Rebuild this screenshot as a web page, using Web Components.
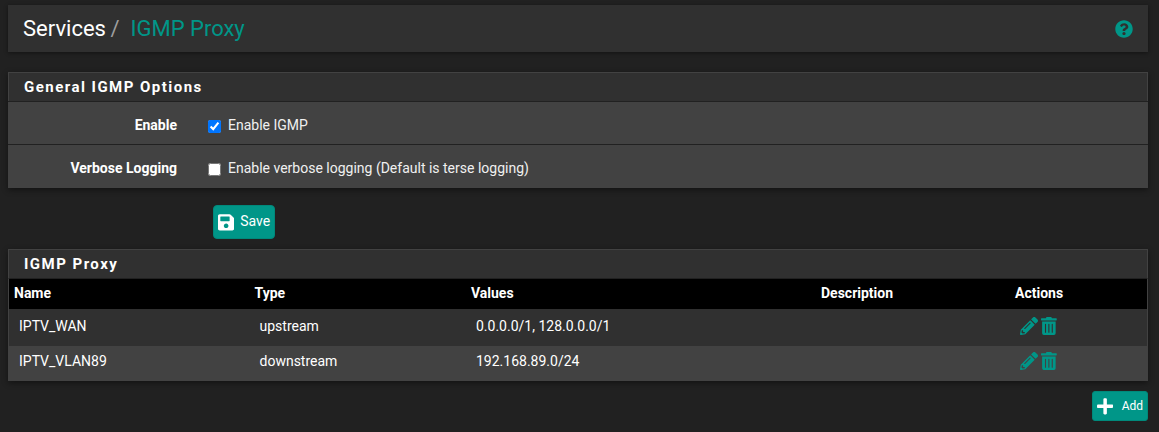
<!DOCTYPE html>
<html lang="en">
<head>
<meta charset="utf-8">
<title>Services / IGMP Proxy</title>
<style>
html{background:#212121}
body{margin:0;padding:5px 11px 0 8px;color:#fff;font:14px/20px Roboto,sans-serif;overflow:hidden}
.save{margin:17px 0 10px 205px;display:flex}
.add{display:flex;justify-content:flex-end;margin-top:10px}
</style>
</head>
<body>
<page-header section="Services" page="IGMP Proxy"></page-header>
<option-panel heading="General IGMP Options">
  <form-row label="Enable" checked>Enable IGMP</form-row>
  <form-row label="Verbose Logging">Enable verbose logging (Default is terse logging)</form-row>
</option-panel>
<div class="save"><action-button icon="save">Save</action-button></div>
<option-panel heading="IGMP Proxy"><proxy-table></proxy-table></option-panel>
<div class="add"><action-button icon="plus" small>Add</action-button></div>
<script>
const ICONS={
 help:[512,'M504 256c0 136.997-111.043 248-248 248S8 392.997 8 256C8 119.083 119.043 8 256 8s248 111.083 248 248zM262.655 90c-54.497 0-89.255 22.957-116.549 63.758-3.536 5.286-2.353 12.415 2.715 16.258l34.699 26.31c5.205 3.947 12.621 3.008 16.665-2.122 17.864-22.658 30.113-35.797 57.303-35.797 20.429 0 45.698 13.148 45.698 32.958 0 14.976-12.363 22.667-32.534 33.976C247.128 238.528 216 254.941 216 296v4c0 6.627 5.373 12 12 12h56c6.627 0 12-5.373 12-12v-1.333c0-28.462 83.186-29.647 83.186-106.667 0-58.002-60.165-102-116.531-102zM256 338c-25.365 0-46 20.635-46 46 0 25.364 20.635 46 46 46s46-20.636 46-46c0-25.365-20.635-46-46-46z'],
 save:[448,'M433.941 129.941l-83.882-83.882A48 48 0 0 0 316.118 32H48C21.49 32 0 53.49 0 80v352c0 26.51 21.49 48 48 48h352c26.51 0 48-21.49 48-48V163.882a48 48 0 0 0-14.059-33.941zM224 416c-35.346 0-64-28.654-64-64 0-35.346 28.654-64 64-64s64 28.654 64 64c0 35.346-28.654 64-64 64zm96-304.52V212c0 6.627-5.373 12-12 12H76c-6.627 0-12-5.373-12-12V108c0-6.627 5.373-12 12-12h228.52c3.183 0 6.235 1.264 8.485 3.515l3.48 3.48A11.996 11.996 0 0 1 320 111.48z'],
 plus:[448,'M416 208H272V64c0-17.67-14.33-32-32-32h-32c-17.67 0-32 14.33-32 32v144H32c-17.67 0-32 14.33-32 32v32c0 17.67 14.33 32 32 32h144v144c0 17.67 14.33 32 32 32h32c17.67 0 32-14.33 32-32V304h144c17.67 0 32-14.33 32-32v-32c0-17.67-14.33-32-32-32z'],
 pencil:[512,'M497.9 142.1l-46.1 46.1c-4.7 4.7-12.3 4.7-17 0l-111-111c-4.7-4.7-4.7-12.3 0-17l46.1-46.1c18.7-18.7 49.1-18.7 67.9 0l60.1 60.1c18.8 18.7 18.8 49.1 0 67.9zM284.2 99.8L21.6 362.4.4 483.9c-2.9 16.4 11.4 30.6 27.8 27.8l121.5-21.3 262.6-262.6c4.7-4.7 4.7-12.3 0-17l-111-111c-4.8-4.7-12.4-4.7-17.1 0zM124.1 339.9c-5.5-5.5-5.5-14.3 0-19.8l154-154c5.5-5.5 14.3-5.5 19.8 0s5.5 14.3 0 19.8l-154 154c-5.5 5.5-14.3 5.5-19.8 0zM88 424h48v36.3l-64.5 11.3-31.1-31.1L51.7 376H88v48z'],
 trash:[448,'M32 464a48 48 0 0 0 48 48h288a48 48 0 0 0 48-48V128H32zm272-256a16 16 0 0 1 32 0v224a16 16 0 0 1-32 0zm-96 0a16 16 0 0 1 32 0v224a16 16 0 0 1-32 0zm-96 0a16 16 0 0 1 32 0v224a16 16 0 0 1-32 0zM432 32H312l-9.4-18.7A24 24 0 0 0 281.1 0H166.8a23.72 23.72 0 0 0-21.4 13.3L136 32H16A16 16 0 0 0 0 48v32a16 16 0 0 0 16 16h416a16 16 0 0 0 16-16V48a16 16 0 0 0-16-16z']
};
class Base extends HTMLElement{
  connectedCallback(){
    if(this.shadowRoot)return;
    this.attachShadow({mode:'open'}).innerHTML=this.view();
  }
  a(n){return this.getAttribute(n)||''}
}
customElements.define('fa-icon',class extends Base{
  view(){const [w,d]=ICONS[this.a('name')];
    return `<style>:host{display:block;flex:none}svg{display:block;height:var(--icon,18.6px);width:calc(var(--icon,18.6px)*${w/512});fill:currentColor}</style><svg viewBox="0 0 ${w} 512"><path fill-rule="evenodd" d="${d}"/></svg>`}
});
customElements.define('page-header',class extends Base{
  view(){return `<style>
    :host{display:flex;align-items:center;box-sizing:border-box;height:47px;padding:0 15px;background:#303030;box-shadow:0 1px 4px rgba(0,0,0,.45);font-size:22px;line-height:26px;margin-bottom:20px}
    i{font-style:normal;color:#9e9e9e;margin:0 11px 0 4.5px}b{font-weight:400;color:#009688;flex:1}fa-icon{--icon:18px;color:#009688;margin-top:1px}
    </style><span>${this.a('section')}</span><i>/</i><b>${this.a('page')}</b><fa-icon name="help"></fa-icon>`}
});
customElements.define('option-panel',class extends Base{
  view(){return `<style>
    :host{display:block;background:#424242;box-shadow:0 2px 6px rgba(0,0,0,.45)}
    h2{margin:0;box-sizing:border-box;height:29px;padding:0 15px;border:1px solid #424242;border-bottom:0;background:#303030;font-size:15px;line-height:28px;font-weight:700;letter-spacing:1.47px}
    </style><h2>${this.a('heading')}</h2><slot></slot>`}
});
customElements.define('form-row',class extends Base{
  view(){return `<style>
    :host{display:flex;align-items:center;box-sizing:border-box;height:43px;border-top:1px solid #212121;padding-top:4px}
    :host(:last-child){height:44px;padding-top:3px}
    b{width:169px;text-align:right;font-weight:700}
    label{display:flex;align-items:center;color:#f0f0f0}
    input{margin:3px 7px 0 31px;width:13px;height:13px}
    </style><b>${this.a('label')}</b><label><input type="checkbox" ${this.hasAttribute('checked')?'checked':''}><slot></slot></label>`}
});
customElements.define('action-button',class extends Base{
  view(){return `<style>
    :host{display:block}
    button{display:flex;align-items:center;box-sizing:border-box;width:62px;height:34px;padding:0 0 0 4px;gap:6px;border:1px solid #00897b;border-radius:4px;background:#009688;color:#fff;font:14px/20px Roboto,sans-serif}
    span{padding-bottom:2px}
    :host([small]) button{width:56px;height:30px;font-size:12px;gap:8.5px;border-radius:3px}
    :host([small]) span{padding:0}
    </style><button><fa-icon name="${this.a('icon')}"></fa-icon><span><slot></slot></span></button>`}
});
customElements.define('proxy-table',class extends Base{
  view(){
    const rows=[['IPTV_WAN','upstream','0.0.0.0/1, 128.0.0.0/1'],['IPTV_VLAN89','downstream','192.168.89.0/24']];
    return `<style>
    :host{display:block;border:1px solid #424242;border-top:1px solid #212121;border-bottom:0}
    .r{display:grid;box-sizing:border-box;grid-template-columns:240.5px 216.5px 350px 194px 1fr;align-items:center;height:37px;padding-bottom:4px;background:#303030}
    .r>*{padding-left:10px}
    .h{height:30px;padding-bottom:2px;background:#000;font-weight:700}.h>*{padding-left:5px}
    .r:last-child{height:35px;padding-bottom:6px;background:#424242}
    .act{--icon:18px;display:flex;gap:3px;padding-top:1px;color:#009688}
    </style><div class="r h"><span>Name</span><span>Type</span><span>Values</span><span>Description</span><span>Actions</span></div>`+
    rows.map(r=>`<div class="r">${r.map(c=>`<span>${c}</span>`).join('')}<span></span><div class="act"><fa-icon name="pencil"></fa-icon><fa-icon name="trash"></fa-icon></div></div>`).join('')}
});
</script>
</body>
</html>
